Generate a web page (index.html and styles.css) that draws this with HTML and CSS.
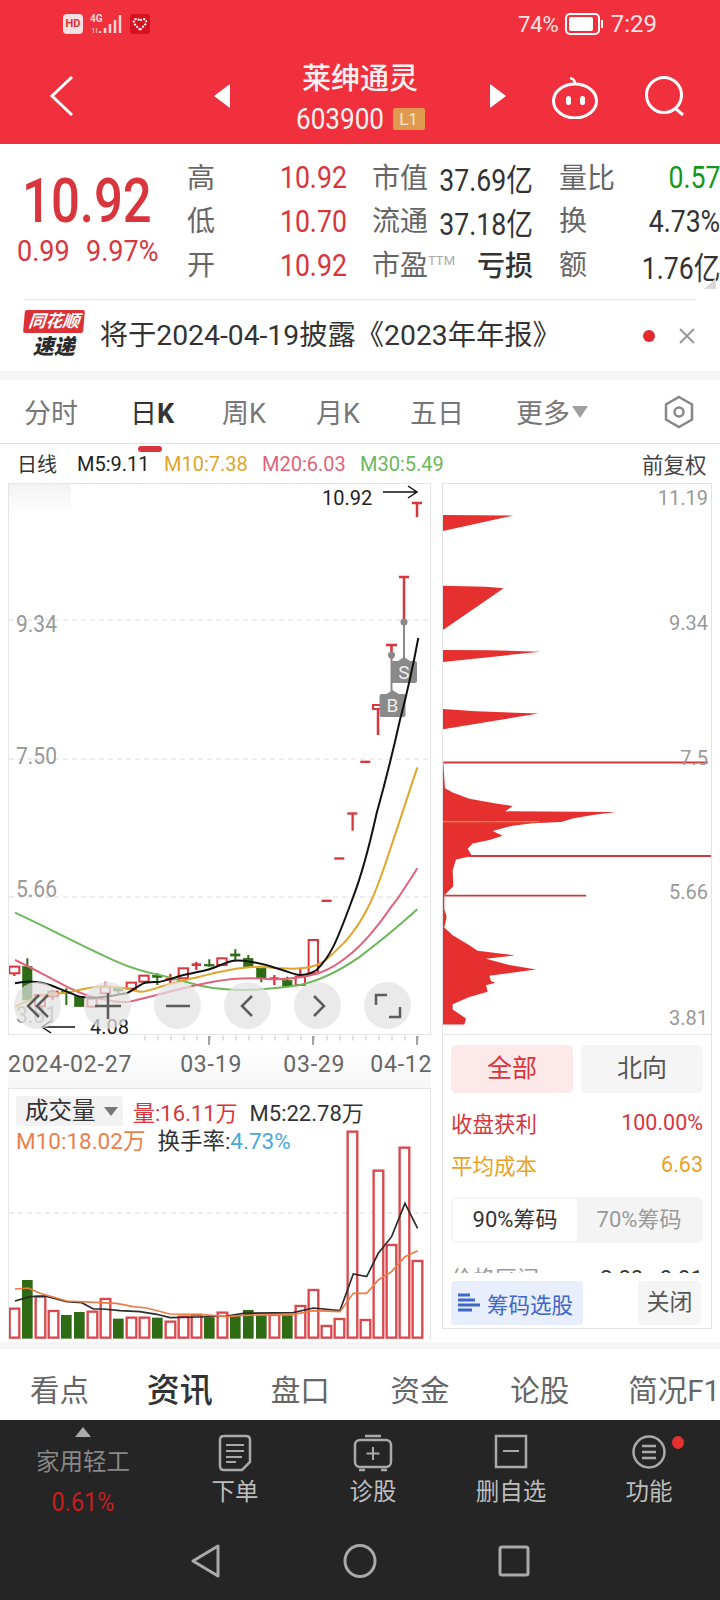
FILE: index.html
```html
<!DOCTYPE html>
<html lang="zh">
<head>
    <meta charset="UTF-8">
    <meta name="viewport" content="width=device-width, initial-scale=1.0">
    <title>莱绅通灵</title>
    <link rel="stylesheet" href="styles.css">
</head>
<body>

    <!-- Red header -->
    <div class="header">
        <div class="status">
            <span class="hd">HD</span>
            <svg class="signal" width="34" height="24" viewBox="0 0 34 24">
                <text x="0" y="10" class="net">4G</text>
                <text x="1" y="21" class="net-small">1l</text>
                <path d="M10 19v2M15 16v5M20 12v9M25 8v13M30 3v18" class="signal-bars"/>
            </svg>
            <svg class="app-badge" width="20" height="20" viewBox="0 0 20 20">
                <rect width="20" height="20" rx="3" fill="#d5121e"/>
                <path d="M10 16 4 9.500q-1-4 2.500-4.500 2 0 3.500 2 1.500-2 3.500-2 3.500.5 2.500 4.500z" fill="none" stroke="#fff" stroke-width="2" stroke-dasharray="2 1.200"/>
            </svg>
            <span class="status-right">
                <span class="pct">74%</span>
                <svg width="39" height="22" viewBox="0 0 39 22">
                    <rect x="1" y="1" width="33" height="20" rx="4" fill="none" stroke="#fff" stroke-width="2"/>
                    <rect x="4" y="4" width="24" height="14" rx="2" fill="#fff"/>
                    <rect x="36" y="7" width="2" height="8" fill="#fff"/>
                </svg>
                <span class="clock">7:29</span>
            </span>
        </div>
        <div class="nav">
            <svg class="back" width="26" height="42" viewBox="0 0 26 42"><path d="M23 2 3 21l20 19" fill="none" stroke="#fff" stroke-width="3"/></svg>
            <svg class="arrow-left" width="16" height="24" viewBox="0 0 16 24"><path d="M16 0v24L0 12z" fill="#fff"/></svg>
            <div class="title">
                <div class="name">莱绅通灵</div>
                <div class="code"><span class="code-num">603900</span><span class="level">L1</span></div>
            </div>
            <svg class="arrow-right" width="16" height="24" viewBox="0 0 16 24"><path d="M0 0v24l16-12z" fill="#fff"/></svg>
            <svg class="robot" width="48" height="44" viewBox="0 0 48 44">
                <ellipse cx="24" cy="26" rx="21.500" ry="17" fill="none" stroke="#fff" stroke-width="3"/>
                <path d="M24 9q0-5-5-6" fill="none" stroke="#fff" stroke-width="2.500"/>
                <rect x="15" y="21" width="5" height="9" rx="2.500" fill="#fff"/>
                <rect x="29" y="21" width="5" height="9" rx="2.500" fill="#fff"/>
            </svg>
            <svg class="search" width="42" height="40" viewBox="0 0 42 40">
                <circle cx="20" cy="19" r="17.500" fill="none" stroke="#fff" stroke-width="3"/>
                <path d="m31 32 8 7" stroke="#fff" stroke-width="3"/>
            </svg>
        </div>
    </div>

    <!-- Quote -->
    <div class="quote">
        <div class="price-box">
            <div class="price">10.92</div>
            <div class="change"><span>0.99</span><span>9.97%</span></div>
        </div>
        <div class="stats">
            <span class="lbl">高</span><span class="val red">10.92</span>
            <span class="lbl pad">市值</span><span class="val">37.69亿</span>
            <span class="lbl pad2">量比</span><span class="val green">0.57</span>

            <span class="lbl">低</span><span class="val red">10.70</span>
            <span class="lbl pad">流通</span><span class="val">37.18亿</span>
            <span class="lbl pad2">换</span><span class="val">4.73%</span>

            <span class="lbl">开</span><span class="val red">10.92</span>
            <span class="lbl pad">市盈<sup class="ttm">TTM</sup></span><span class="loss">亏损</span>
            <span class="lbl pad2">额</span><span class="val">1.76亿</span>
        </div>
        <div class="corner"></div>
    </div>

    <!-- Notice -->
    <div class="notice">
        <div class="logo">
            <div class="logo-top">同花顺</div>
            <div class="logo-bottom">速递</div>
        </div>
        <div class="notice-text">将于2024-04-19披露《2023年年报》</div>
        <div class="dot"></div>
        <svg class="close" width="18" height="18" viewBox="0 0 18 18"><path d="m2 2 14 14M16 2 2 16" stroke="#999" stroke-width="2"/></svg>
    </div>

    <!-- Period tabs -->
    <div class="tabs">
        <span class="tab w1">分时</span>
        <span class="tab w2 active">日<b>K</b></span>
        <span class="tab w3">周K</span>
        <span class="tab w3">月K</span>
        <span class="tab w1">五日</span>
        <span class="tab">更多<i class="caret"></i></span>
        <svg class="hex" width="32" height="34" viewBox="0 0 32 34">
            <path d="M16 2 29 9.500v15L16 32 3 24.500v-15z" fill="none" stroke="#888" stroke-width="2.500"/>
            <circle cx="16" cy="17" r="4.500" fill="none" stroke="#888" stroke-width="2.500"/>
        </svg>
    </div>

    <!-- MA legend -->
    <div class="legend">
        <span class="cn">日线</span>
        <span class="m5">M5:9.11</span>
        <span class="m10">M10:7.38</span>
        <span class="m20">M20:6.03</span>
        <span class="m30">M30:5.49</span>
        <span class="adjust">前复权</span>
    </div>

    <div class="main">
        <div class="left">
            <!-- K line chart -->
            <div class="kbox">
                <div class="fade"></div>
                <svg class="kchart" width="421" height="550" viewBox="9 484 421 550">
                    <path d="M9 620H430M9 759H430M9 897H430" class="grid"/>
                    <text x="16" y="632" class="axis" textLength="41" lengthAdjust="spacingAndGlyphs">9.34</text>
                    <text x="16" y="764" class="axis" textLength="41" lengthAdjust="spacingAndGlyphs">7.50</text>
                    <text x="16" y="897" class="axis" textLength="41" lengthAdjust="spacingAndGlyphs">5.66</text>
                    <text x="16" y="1023" class="axis" textLength="41" lengthAdjust="spacingAndGlyphs">3.81</text>

                    <text x="322" y="505" class="mark">10.92</text>
                    <path d="M383 492h34m-9-6 9 6-9 6" class="pointer"/>
                    <text x="90" y="1034" class="mark">4.08</text>
                    <path d="M75 1027H42m9-6-9 6 9 6" class="pointer"/>

                    <!-- candles, drawn at 3x -->
                    <g transform="translate(0 720) scale(.3333)">
                        <g class="hollow">
                            <path d="M43 760v8M158 810v30M316 785v20M901 745v25"/>
                            <rect x="28" y="740" width="30" height="20"/>
                            <rect x="105" y="825" width="30" height="34"/>
                            <rect x="145" y="815" width="28" height="14"/>
                            <rect x="262" y="836" width="28" height="24"/>
                            <rect x="302" y="800" width="28" height="20"/>
                            <rect x="380" y="788" width="28" height="18"/>
                            <rect x="418" y="767" width="28" height="18"/>
                            <rect x="536" y="745" width="28" height="30"/>
                            <rect x="652" y="715" width="28" height="20"/>
                            <rect x="887" y="770" width="28" height="25"/>
                            <rect x="926" y="660" width="28" height="100"/>
                        </g>
                        <g class="bear">
                            <path d="M82 715v30M199 805v50M745 705v15M784 775v12M862 770v15M355 800v20M472 760v35M628 718v22M706 688v32"/>
                            <rect x="68" y="740" width="28" height="100"/>
                            <rect x="185" y="815" width="28" height="6"/>
                            <rect x="224" y="830" width="28" height="30"/>
                            <rect x="341" y="805" width="28" height="8"/>
                            <rect x="458" y="766" width="28" height="6"/>
                            <rect x="614" y="733" width="28" height="5"/>
                            <rect x="692" y="702" width="28" height="6"/>
                            <rect x="731" y="715" width="28" height="25"/>
                            <rect x="770" y="745" width="28" height="30"/>
                            <rect x="848" y="782" width="28" height="18"/>
                        </g>
                        <g class="bull">
                            <path d="M511 762v28M589 725v25M823 765v30"/>
                            <rect x="497" y="774" width="28" height="7"/>
                            <rect x="575" y="730" width="28" height="8"/>
                            <rect x="809" y="772" width="28" height="8"/>
                            <rect x="965" y="539" width="30" height="7"/>
                            <rect x="1003" y="412" width="30" height="7"/>
                            <rect x="1042" y="277" width="30" height="7"/>
                            <path d="M1058 280v52"/>
                            <rect x="1081" y="122" width="30" height="7"/>
                        </g>
                    </g>

                    <!-- last candles and trade marks -->
                    <path d="M378 705v30M391.500 645v14M404 577v45" class="wick"/>
                    <rect x="373" y="705" width="10" height="4" class="body-hollow"/>
                    <path d="M386 645h11M399 577h10M412 503h10M417 503v14" class="wick"/>
                    <circle cx="391.500" cy="655" r="3.500" class="tag"/>
                    <circle cx="404" cy="622" r="3.500" class="tag"/>
                    <path d="M391.500 655v36M404 622v36" class="tag-line"/>
                    <path d="M404 657l6 4h5q2 0 2 2v18q0 2-2 2h-22q-2 0-2-2v-18q0-2 2-2h5z" class="tag"/>
                    <path d="M392.500 690l6 4h5q2 0 2 2v19q0 2-2 2h-22q-2 0-2-2v-19q0-2 2-2h5z" class="tag"/>
                    <text x="404" y="679" class="tag-text">S</text>
                    <text x="392.500" y="712" class="tag-text">B</text>

                    <!-- moving averages -->
                    <g transform="translate(0 720) scale(.3333)">
                        <path class="ma30" d="M45 578C120 612 250 680 350 725C400 748 460 762 500 770C570 790 620 805 680 808C730 812 800 810 900 795C960 782 1030 745 1080 710C1140 665 1200 615 1252 568"/>
                        <path class="ma20" d="M45 720C100 745 150 775 200 800C240 820 280 835 320 840C350 846 375 848 390 845C420 838 450 830 470 825C510 815 580 795 640 785C690 777 720 775 750 775C790 775 820 780 830 778C860 778 880 775 900 772C930 768 960 760 980 750C1010 735 1040 712 1060 695C1090 670 1110 645 1130 620C1150 595 1170 565 1190 540C1210 510 1232 478 1252 445"/>
                        <path class="ma10" d="M45 860C90 840 120 825 150 822C170 820 190 820 200 818C240 810 270 800 300 800C335 798 360 802 380 805C405 812 420 817 430 815C455 810 480 800 500 795C540 785 570 775 600 770C640 760 690 748 720 745C745 742 765 740 780 740C800 740 825 745 850 745C880 748 910 745 930 742C945 738 958 732 970 725C990 712 1015 685 1040 660C1065 630 1085 600 1100 570C1125 525 1145 465 1160 420C1190 330 1225 225 1252 142"/>
                        <path class="ma5" d="M45 790C70 785 85 783 100 785C120 786 135 790 150 795C170 802 185 810 200 815C215 820 230 828 240 830C290 840 340 825 380 820C400 810 415 797 430 790C445 785 465 787 480 785C505 780 530 770 550 765C575 760 600 755 620 750C650 742 680 725 700 722C720 720 735 722 750 725C780 730 810 738 830 745C860 752 880 765 900 765C920 765 935 760 950 750C965 735 985 710 1000 680C1020 640 1045 570 1060 530C1085 465 1110 370 1130 280C1155 190 1180 90 1200 0C1220 -75 1240 -165 1255 -246"/>
                    </g>
                </svg>
                <div class="zoom-btns">
                    <span class="zoom-btn"><svg width="30" height="30" viewBox="0 0 30 30"><path d="M16 4 5 15l11 11M25 4 14 15l11 11"/></svg></span>
                    <span class="zoom-btn"><svg width="30" height="30" viewBox="0 0 30 30"><path d="M15 2v26M2 15h26"/></svg></span>
                    <span class="zoom-btn"><svg width="30" height="30" viewBox="0 0 30 30"><path d="M3 15h24"/></svg></span>
                    <span class="zoom-btn"><svg width="30" height="30" viewBox="0 0 30 30"><path d="M19 5 9 15l10 10"/></svg></span>
                    <span class="zoom-btn"><svg width="30" height="30" viewBox="0 0 30 30"><path d="M11 5l10 10-10 10"/></svg></span>
                    <span class="zoom-btn"><svg width="30" height="30" viewBox="0 0 30 30"><path d="M3 14V4h11M27 16v10H16"/></svg></span>
                </div>
            </div>

            <!-- Time axis -->
            <svg class="ticks" width="423" height="11" viewBox="8 1035 423 11">
                <path d="M144.500 1038H420" class="tick-minor"/>
                <path d="M209 1036v9M313 1036v9M417 1036v9" class="tick-major"/>
            </svg>
            <div class="dates">
                <span class="d1">2024-02-27</span>
                <span class="d2">03-19</span>
                <span class="d3">03-29</span>
                <span class="d4">04-12</span>
            </div>

            <!-- Volume -->
            <div class="volbox">
                <div class="vol-info">
                    <div class="vol-row">
                        <span class="vol-pill">成交量<i class="caret small"></i></span>
                        <span class="v-red">量:16.11万</span>
                        <span class="v-dark">M5:22.78万</span>
                    </div>
                    <div class="vol-row second">
                        <span class="v-orange">M10:18.02万</span>
                        <span class="v-dark">换手率:<em class="v-blue">4.73%</em></span>
                    </div>
                </div>
                <svg width="421" height="252" viewBox="9 1089 421 252">
                    <path d="M9 1213H430" class="grid"/>
                    <g transform="translate(0 1080) scale(.3333)">
                        <g class="vol-up">
                            <rect x="29" y="686" width="29" height="87"/>
                            <rect x="107" y="650" width="29" height="123"/>
                            <rect x="146" y="693" width="29" height="80"/>
                            <rect x="263" y="695" width="29" height="78"/>
                            <rect x="302" y="657" width="29" height="116"/>
                            <rect x="380" y="713" width="29" height="60"/>
                            <rect x="419" y="713" width="29" height="60"/>
                            <rect x="497" y="725" width="29" height="48"/>
                            <rect x="536" y="710" width="29" height="63"/>
                            <rect x="575" y="705" width="29" height="68"/>
                            <rect x="653" y="698" width="29" height="75"/>
                            <rect x="809" y="705" width="29" height="68"/>
                            <rect x="887" y="678" width="29" height="95"/>
                            <rect x="926" y="630" width="29" height="143"/>
                            <rect x="965" y="738" width="29" height="35"/>
                            <rect x="1004" y="717" width="29" height="56"/>
                            <rect x="1043" y="155" width="29" height="618"/>
                            <rect x="1082" y="720" width="29" height="53"/>
                            <rect x="1121" y="272" width="29" height="501"/>
                            <rect x="1160" y="495" width="29" height="278"/>
                            <rect x="1199" y="203" width="29" height="570"/>
                            <rect x="1238" y="543" width="29" height="230"/>
                        </g>
                        <g class="vol-down">
                            <rect x="66" y="600" width="32" height="176"/>
                            <rect x="183" y="705" width="32" height="71"/>
                            <rect x="222" y="696" width="32" height="80"/>
                            <rect x="339" y="716" width="32" height="60"/>
                            <rect x="456" y="713" width="32" height="63"/>
                            <rect x="612" y="712" width="32" height="64"/>
                            <rect x="690" y="706" width="32" height="70"/>
                            <rect x="729" y="690" width="32" height="86"/>
                            <rect x="768" y="706" width="32" height="70"/>
                            <rect x="846" y="706" width="32" height="70"/>
                        </g>
                        <polyline class="vol-ma5" points="45,663 90,650 135,648 200,665 245,668 280,687 310,687 360,692 420,695 470,703 510,713 600,711 680,708 730,700 880,698 940,684 1020,692 1060,582 1100,590 1135,520 1175,470 1215,370 1253,445"/>
                        <polyline class="vol-ma10" points="45,627 85,624 120,640 200,663 300,668 350,670 400,680 440,684 510,702 600,703 680,710 730,706 880,704 940,692 1020,695 1060,640 1100,640 1135,600 1175,575 1215,530 1253,512"/>
                    </g>
                </svg>
            </div>
        </div>

        <div class="right">
            <!-- Chip distribution -->
            <div class="chipbox">
                <svg width="268" height="550" viewBox="443 483 268 550">
                    <g transform="translate(436 480) scale(.3333 .35714)">
                        <path class="chip" d="M20 95 232 97 20 140z"/>
                        <path class="chip" d="M20 293 150 296 203 300 20 418z"/>
                        <path class="chip" d="M20 473 160 474 312 478 20 507z"/>
                        <path class="chip" d="M20 638 120 645 308 651 20 695z"/>
                        <path class="chip" d="M20 765 27 860 50 872 100 890 180 903 230 910 208 925 540 927 470 935 410 945 375 955 290 958 230 965 170 980 200 993 160 1005 110 1015 95 1030 108 1050 60 1060 50 1090 52 1135 25 1160 25 1200 32 1220 25 1250 50 1272 100 1300 125 1315 237 1328 150 1338 220 1355 300 1368 160 1385 165 1400 178 1405 150 1412 155 1430 100 1445 50 1465 50 1480 90 1505 85 1522 20 1522z"/>
                        <path class="chip-line" d="M22 788H815M100 1050H825M25 1161H450"/>
                        <path class="chip-cost" d="M20 954H310"/>
                    </g>
                    <text x="708" y="504" class="chip-axis">11.19</text>
                    <text x="708" y="629" class="chip-axis">9.34</text>
                    <text x="708" y="764" class="chip-axis">7.5</text>
                    <text x="708" y="898" class="chip-axis">5.66</text>
                    <text x="708" y="1024" class="chip-axis">3.81</text>
                </svg>
            </div>

            <div class="chip-panel">
                <div class="btn-pair">
                    <span class="pair on">全部</span>
                    <span class="pair">北向</span>
                </div>
                <div class="kv profit"><span>收盘获利</span><span>100.00%</span></div>
                <div class="kv cost"><span>平均成本</span><span>6.63</span></div>
                <div class="seg">
                    <span class="seg-item on">90%筹码</span>
                    <span class="seg-item">70%筹码</span>
                </div>
                <div class="cut"><span class="cut-l">价格区间</span><span class="cut-r">3.88 - 9.91</span></div>
                <div class="panel-foot">
                    <span class="pick">
                        <svg width="22" height="22" viewBox="0 0 22 22"><path d="M0 3h12M0 8h17M0 13h22M0 18h14" stroke="#3f66c9" stroke-width="3"/></svg>
                        筹码选股
                    </span>
                    <span class="shut">关闭</span>
                </div>
            </div>
        </div>
    </div>

    <div class="band"></div>

    <!-- Info tabs -->
    <div class="info-tabs">
        <span class="i1">看点</span>
        <span class="i2">资讯</span>
        <span class="i3">盘口</span>
        <span class="i3">资金</span>
        <span class="i4">论股</span>
        <span>简况F1</span>
    </div>

    <!-- Bottom toolbar -->
    <div class="toolbar">
        <div class="tools">
            <div class="sector">
                <div class="up"></div>
                <div class="sector-name">家用轻工</div>
                <div class="sector-pct">0.61%</div>
            </div>
            <div class="tool">
                <svg width="34" height="38" viewBox="0 0 34 38">
                    <path d="M6 2h22q4 0 4 4v22l-8 8H6q-4 0-4-4V6q0-4 4-4z" class="ico"/>
                    <path d="M8 11h18M8 17h18M8 23h16M8 28h10" class="ico-thin"/>
                </svg>
                <span>下单</span>
            </div>
            <div class="tool">
                <svg width="40" height="38" viewBox="0 0 40 38">
                    <path d="M12 2h16" class="ico"/>
                    <rect x="2" y="6" width="36" height="27" rx="5" class="ico"/>
                    <path d="M20 13v13M13.500 19.500h13" class="ico-thin"/>
                    <path d="M6 36h6M28 36h6" class="ico"/>
                </svg>
                <span>诊股</span>
            </div>
            <div class="tool">
                <svg width="34" height="38" viewBox="0 0 34 38">
                    <rect x="2" y="2" width="30" height="31" class="ico"/>
                    <path d="M9 17h16" class="ico-thin"/>
                </svg>
                <span>删自选</span>
            </div>
            <div class="tool func">
                <svg width="36" height="38" viewBox="0 0 36 38">
                    <circle cx="18" cy="18" r="15.500" class="ico"/>
                    <path d="M11 12h14M11 18h14M11 24h14" class="ico"/>
                </svg>
                <i class="func-dot"></i>
                <span>功能</span>
            </div>
        </div>
        <div class="softkeys">
            <svg width="32" height="34" viewBox="0 0 32 34"><path d="M28 2v30L3 17z" class="key"/></svg>
            <svg width="34" height="34" viewBox="0 0 34 34"><ellipse cx="17" cy="17" rx="15" ry="15.500" class="key"/></svg>
            <svg width="32" height="34" viewBox="0 0 32 34"><rect x="2" y="3" width="28" height="28" rx="2" class="key"/></svg>
        </div>
    </div>

</body>
</html>
```

FILE: styles.css
```css
/* Global */
* {
    margin: 0;
    padding: 0;
    box-sizing: border-box;
}

body {
    width: 720px;
    height: 1600px;
    overflow: hidden;
    background: white;
    font-family: Roboto, 'Noto Sans CJK SC', sans-serif;
    color: #333;
}

svg {
    display: block;
}

/* Header */
.header {
    height: 144px;
    background: #f0313d;
    color: white;
}

.status {
    height: 48px;
    display: flex;
    align-items: center;
    padding-left: 63px;
    padding-right: 63px;
}

.hd {
    width: 20px;
    height: 20px;
    background: #f6dfe0;
    color: #d8323c;
    border-radius: 4px;
    font-size: 11px;
    font-weight: bold;
    line-height: 20px;
    text-align: center;
}

.signal {
    margin-left: 7px;
}

.net {
    font-size: 10px;
    font-weight: bold;
    fill: #f7d5d7;
}

.net-small {
    font-size: 8px;
    fill: #f7d5d7;
}

.signal-bars {
    stroke: #f7d5d7;
    stroke-width: 2.5;
    fill: none;
}

.app-badge {
    margin-left: 6px;
}

.status-right {
    margin-left: auto;
    display: flex;
    align-items: center;
}

.pct {
    font-size: 22px;
    color: #fbe3e4;
    margin-right: 6px;
}

.clock {
    font-size: 24px;
    color: #fbe3e4;
    margin-left: 7px;
}

.nav {
    height: 96px;
    display: flex;
    align-items: center;
    padding-left: 49px;
}

.back {
    margin-right: 139px;
}

.arrow-left {
    margin-right: 48px;
}

.title {
    width: 164px;
    text-align: center;
}

.name {
    font-size: 29px;
    font-weight: 500;
    line-height: 38px;
    color: #fdf0f0;
}

.code {
    display: flex;
    align-items: center;
    justify-content: center;
    gap: 10px;
    margin-top: 8px;
    font-size: 29px;
    line-height: 26px;
    color: #fdf0f0;
}

.code-num {
    width: 87px;
    transform: scaleX(.9);
    transform-origin: left;
}

.level {
    width: 32px;
    height: 22px;
    background: #e09a50;
    border-radius: 2px;
    color: #f8e4cb;
    font-size: 17px;
    line-height: 22px;
    text-align: center;
}

.arrow-right {
    margin-left: 48px;
}

.robot {
    margin-left: 45px;
    margin-top: 2px;
}

.search {
    margin-left: 45px;
}

/* Quote */
.quote {
    height: 155px;
    display: flex;
    position: relative;
}

.price-box {
    width: 187px;
}

.price {
    margin-top: 26px;
    margin-left: 22px;
    font-size: 62px;
    font-weight: 500;
    line-height: 62px;
    color: #d8353d;
    transform: scaleX(.82);
    transform-origin: left;
}

.change {
    display: flex;
    gap: 10px;
    margin-top: 1px;
    margin-left: 17px;
    font-size: 30px;
    line-height: 36px;
    color: #d8353d;
}

.change span {
    transform: scaleX(.9);
    transform-origin: left;
}

.stats {
    display: grid;
    grid-template-columns: 60px 100px 93px 93px 107px 80px;
    grid-template-rows: 43px 44px 44px;
    align-items: center;
    height: 131px;
    margin-top: 12px;
}

.lbl {
    margin-top: -4px;
    font-size: 28px;
    color: #666;
    white-space: nowrap;
}

.pad {
    padding-left: 25px;
}

.pad2 {
    padding-left: 26px;
}

.val {
    justify-self: end;
    font-size: 31px;
    white-space: nowrap;
    transform: scaleX(.86);
    transform-origin: right;
}

.red {
    color: #d8353d;
}

.green {
    color: #129a1e;
}

.loss {
    margin-top: -2px;
    font-size: 28px;
    font-weight: 500;
    text-align: right;
    white-space: nowrap;
}

.ttm {
    font-size: 13px;
    color: #aaa;
    vertical-align: 10px;
    line-height: 0;
}

.corner {
    position: absolute;
    right: 4px;
    bottom: 10px;
    border-left: 12px solid transparent;
    border-bottom: 11px solid #d8d8d8;
}

/* Notice */
.notice {
    height: 72px;
    margin: 0 24px;
    border-top: 1px solid #e8e8e8;
    display: flex;
    align-items: center;
}

.logo {
    width: 60px;
    text-align: center;
}

.logo-top {
    background: #dd3138;
    color: white;
    font-size: 17px;
    font-weight: bold;
    font-style: italic;
    line-height: 23px;
    border-radius: 2px;
    transform: skewX(-5deg);
}

.logo-bottom {
    color: #2b2b2b;
    font-size: 21px;
    font-weight: 900;
    font-style: italic;
    line-height: 29px;
}

.notice-text {
    margin-left: 16px;
    width: 546px;
    font-size: 28.300px;
    line-height: 36px;
    color: #333;
    white-space: nowrap;
}

.dot {
    width: 12px;
    height: 12px;
    border-radius: 50%;
    background: #e02a30;
}

.close {
    margin-left: 23px;
}

/* Period tabs */
.tabs {
    border-top: 9px solid #f5f5f5;
    height: 73px;
    border-bottom: 1px solid #e3e3e3;
    display: flex;
    align-items: center;
    padding-left: 24px;
    padding-right: 25px;
    font-size: 27px;
    color: #777;
}

.tab {
    position: relative;
    white-space: nowrap;
}

.w1 {
    width: 106px;
}

.w2 {
    width: 92px;
}

.w3 {
    width: 94px;
}

.active {
    color: #333;
}

.active::after {
    content: "";
    position: absolute;
    left: 8px;
    bottom: -21px;
    width: 24px;
    height: 6px;
    border-radius: 3px;
    background: #d8353d;
}

.caret {
    display: inline-block;
    margin-left: 2px;
    border-left: 8px solid transparent;
    border-right: 8px solid transparent;
    border-top: 12px solid #a0a0a0;
    vertical-align: 5px;
}

.caret.small {
    margin-left: 8px;
    border-left-width: 7px;
    border-right-width: 7px;
    border-top-width: 9px;
    border-top-color: #777;
    vertical-align: 3px;
}

.hex {
    margin-left: auto;
}

/* MA legend */
.legend {
    height: 39px;
    display: flex;
    align-items: center;
    padding-left: 17px;
    font-size: 20px;
    white-space: nowrap;
}

.cn {
    width: 60px;
    color: #333;
}

.m5 {
    width: 87px;
    color: #222;
}

.m10 {
    width: 98px;
    color: #dfa52c;
}

.m20 {
    width: 98px;
    color: #e0637c;
}

.m30 {
    width: 282px;
    color: #6cb85a;
}

.adjust {
    font-size: 21.500px;
    color: #444;
}

/* Main columns */
.main {
    display: flex;
    padding-left: 8px;
    gap: 11px;
    height: 859px;
}

.left {
    width: 423px;
}

.right {
    width: 270px;
}

/* K line box */
.kbox {
    position: relative;
    height: 552px;
    border: 1px solid #e5e5e5;
}

.fade {
    position: absolute;
    left: 0;
    top: 0;
    width: 62px;
    height: 32px;
    background: linear-gradient(#f3f3f3, white);
}

.kchart {
    position: relative;
}

.grid {
    stroke: #dcdcdc;
    stroke-width: 1;
    stroke-dasharray: 5 4;
    fill: none;
}

.axis {
    font-size: 24px;
    fill: #999;
}

.mark {
    font-size: 20px;
    fill: #222;
}

.pointer {
    stroke: #111;
    stroke-width: 1.5;
    fill: none;
}

.hollow rect {
    fill: white;
    stroke: #d8353d;
    stroke-width: 6;
}

.hollow path,
.bull path {
    stroke: #d8353d;
    stroke-width: 7;
}

.bull rect {
    fill: #d8353d;
}

.bear rect {
    fill: #2f6a14;
    stroke: #2f6a14;
    stroke-width: 2;
}

.bear path {
    stroke: #2f6a14;
    stroke-width: 6;
}

.wick {
    stroke: #d8353d;
    stroke-width: 2.5;
    fill: none;
}

.body-hollow {
    fill: white;
    stroke: #d8353d;
    stroke-width: 2;
}

.tag {
    fill: #8a8a8a;
}

.tag-line {
    stroke: #8a8a8a;
    stroke-width: 2;
}

.tag-text {
    font-size: 19px;
    fill: #eee;
    text-anchor: middle;
}

.ma5,
.ma10,
.ma20,
.ma30 {
    fill: none;
    stroke-width: 6;
}

.ma5 {
    stroke: #111;
}

.ma10 {
    stroke: #dfa52c;
}

.ma20 {
    stroke: #e0637c;
}

.ma30 {
    stroke: #6cb85a;
}

/* Buttons lying over the chart */
.zoom-btns {
    position: absolute;
    left: 5px;
    top: 498px;
    display: flex;
    gap: 23px;
}

.zoom-btn {
    width: 47px;
    height: 47px;
    border-radius: 50%;
    background: rgba(226, 226, 226, 0.72);
    display: flex;
    align-items: center;
    justify-content: center;
}

.zoom-btn path {
    fill: none;
    stroke: #5c5c5c;
    stroke-width: 2.5;
}

/* Time axis */
.ticks {
    height: 11px;
}

.tick-minor {
    stroke: #c4c4c4;
    stroke-width: 5;
    stroke-dasharray: 1 12;
    fill: none;
}

.tick-major {
    stroke: #888;
    stroke-width: 1.5;
    fill: none;
}

.dates {
    height: 42px;
    display: flex;
    align-items: center;
    font-size: 23px;
    color: #666;
    letter-spacing: 0.8px;
    padding-bottom: 6px;
    background: linear-gradient(white, #f6f6f6);
    white-space: nowrap;
}

.d2 {
    margin-left: 48px;
}

.d3 {
    margin-left: 41px;
}

.d4 {
    margin-left: 25px;
}

/* Volume */
.volbox {
    position: relative;
    height: 252px;
    border: 1px solid #e5e5e5;
    border-bottom: none;
}

.vol-info {
    position: absolute;
    left: 7px;
    top: 7px;
    font-size: 22px;
    white-space: nowrap;
}

.vol-row {
    display: flex;
    align-items: center;
    height: 30px;
}

.vol-row.second {
    height: 26px;
    gap: 12px;
    font-size: 22.500px;
}

.vol-pill {
    width: 107px;
    height: 30px;
    padding-left: 9px;
    background: #f2f2f2;
    border-radius: 3px;
    font-size: 23.500px;
    line-height: 30px;
    color: #333;
}

.v-red {
    margin-left: 10px;
    color: #d8353d;
}

.vol-row .v-dark {
    color: #333;
}

.vol-pill + .v-red + .v-dark {
    margin-left: 12px;
}

.v-orange {
    color: #ea7f4b;
}

.v-blue {
    font-style: normal;
    color: #4aa9d6;
}

.vol-up rect {
    fill: white;
    stroke: #d8484c;
    stroke-width: 7;
}

.vol-down rect {
    fill: #2f6a14;
}

.vol-ma5,
.vol-ma10 {
    fill: none;
    stroke-width: 5;
}

.vol-ma5 {
    stroke: #2b2b2b;
}

.vol-ma10 {
    stroke: #ee7a45;
}

/* Chip distribution */
.chipbox {
    height: 552px;
    border: 1px solid #e3e3e3;
}

.chip {
    fill: #e5302f;
}

.chip-line {
    stroke: #d0383e;
    stroke-width: 5.5;
    fill: none;
}

.chip-cost {
    stroke: #f0a030;
    stroke-width: 3;
    fill: none;
}

.chip-axis {
    font-size: 20px;
    fill: #999;
    text-anchor: end;
}

.chip-panel {
    height: 294px;
    padding: 10px 8px 0;
    border: 1px solid #e3e3e3;
    border-top: none;
}

.btn-pair {
    display: flex;
    gap: 8px;
}

.pair {
    flex: 1;
    height: 48px;
    border-radius: 5px;
    background: #f5f5f5;
    color: #555;
    font-size: 25px;
    line-height: 48px;
    text-align: center;
}

.pair.on {
    background: #fde8ea;
    color: #d8353d;
}

.kv {
    display: flex;
    justify-content: space-between;
    height: 42px;
    align-items: center;
    font-size: 21.500px;
}

.profit {
    margin-top: 8px;
    color: #d8353d;
}

.cost {
    color: #e8a325;
}

.seg {
    display: flex;
    height: 46px;
    margin-top: 12px;
    padding: 2px;
    background: #f4f4f4;
    border-radius: 6px;
    font-size: 22px;
    line-height: 42px;
    text-align: center;
    color: #999;
}

.seg-item {
    flex: 1;
}

.seg-item.on {
    background: white;
    color: #333;
    border-radius: 3px;
}

.cut {
    height: 8px;
    margin-top: 22px;
    overflow: hidden;
    display: flex;
    justify-content: space-between;
    font-size: 22px;
    line-height: 28px;
}

.cut-l {
    color: #999;
}

.panel-foot {
    display: flex;
    justify-content: space-between;
    margin-top: 8px;
    padding-right: 2px;
}

.pick {
    width: 132px;
    height: 44px;
    background: #e8eefb;
    border-radius: 4px;
    display: flex;
    align-items: center;
    gap: 7px;
    padding-left: 7px;
    color: #3f66c9;
    font-size: 21.500px;
    white-space: nowrap;
}

.shut {
    width: 63px;
    height: 44px;
    background: #f5f5f5;
    border-radius: 4px;
    color: #555;
    font-size: 23px;
    line-height: 44px;
    text-align: center;
}

.band {
    height: 7px;
    background: #f5f5f5;
}

/* Info tabs */
.info-tabs {
    height: 71px;
    display: flex;
    align-items: center;
    padding-top: 7px;
    padding-left: 30px;
    font-size: 29.500px;
    color: #666;
    white-space: nowrap;
}

.i1 {
    width: 117px;
}

.i2 {
    width: 124px;
    font-size: 33px;
    font-weight: 500;
    color: #333;
}

.i3 {
    width: 120px;
}

.i4 {
    width: 118px;
}

/* Bottom toolbar */
.toolbar {
    height: 180px;
    background: #252525;
}

.tools {
    height: 118px;
    display: grid;
    grid-template-columns: 166px 138px 138px 138px 138px;
}

.sector {
    text-align: center;
}

.up {
    width: 0;
    margin: 7px auto 0;
    border-left: 8px solid transparent;
    border-right: 8px solid transparent;
    border-bottom: 10px solid #aaa;
}

.sector-name {
    margin-top: 7px;
    font-size: 23.500px;
    line-height: 36px;
    color: #888;
}

.sector-pct {
    margin-top: 4px;
    font-size: 26px;
    line-height: 36px;
    color: #c81e1e;
    transform: scaleX(.9);
}

.tool {
    position: relative;
    display: flex;
    flex-direction: column;
    align-items: center;
    padding-top: 14px;
    font-size: 23.500px;
    color: #bdbdbd;
}

.tool span {
    margin-top: 2px;
    line-height: 36px;
}

.ico {
    fill: none;
    stroke: #aaa;
    stroke-width: 2.5;
}

.ico-thin {
    fill: none;
    stroke: #aaa;
    stroke-width: 2;
}

.func-dot {
    position: absolute;
    left: 92px;
    top: 16px;
    width: 12px;
    height: 13px;
    border-radius: 50%;
    background: #e8302f;
}

.softkeys {
    display: flex;
    justify-content: center;
    gap: 121px;
    padding-top: 6px;
}

.key {
    fill: none;
    stroke: #aaa;
    stroke-width: 3;
    stroke-linejoin: round;
}
```
